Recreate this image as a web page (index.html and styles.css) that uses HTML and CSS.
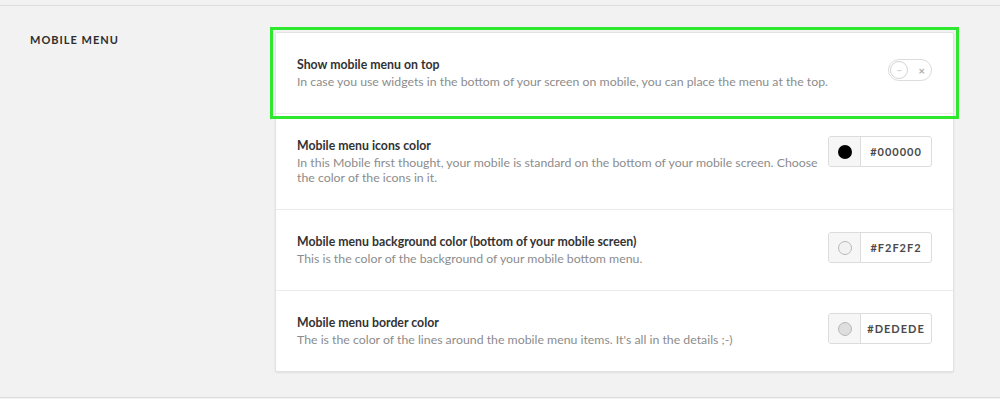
FILE: index.html
```html
<!DOCTYPE html>
<html>
<head>
<meta charset="utf-8">
<link rel="stylesheet" href="styles.css">
</head>
<body>
<section class="settings">
  <h2 class="section-label">MOBILE MENU</h2>
  <div class="card">
    <div class="row row-highlight">
      <div class="text">
        <div class="title">Show mobile menu on top</div>
        <div class="desc">In case you use widgets in the bottom of your screen on mobile, you can place the menu at the top.</div>
      </div>
      <div class="toggle">
        <span class="knob"><span class="dots">···</span></span>
        <span class="xmark">×</span>
      </div>
    </div>
    <div class="row">
      <div class="text">
        <div class="title">Mobile menu icons color</div>
        <div class="desc">In this Mobile first thought, your mobile is standard on the bottom of your mobile screen. Choose the color of the icons in it.</div>
      </div>
      <div class="picker">
        <span class="swatch"><span class="dot dot-black"></span></span>
        <span class="hex">#000000</span>
      </div>
    </div>
    <div class="row">
      <div class="text">
        <div class="title">Mobile menu background color (bottom of your mobile screen)</div>
        <div class="desc">This is the color of the background of your mobile bottom menu.</div>
      </div>
      <div class="picker">
        <span class="swatch"><span class="dot dot-light"></span></span>
        <span class="hex">#F2F2F2</span>
      </div>
    </div>
    <div class="row">
      <div class="text">
        <div class="title">Mobile menu border color</div>
        <div class="desc">The is the color of the lines around the mobile menu items. It's all in the details ;-)</div>
      </div>
      <div class="picker">
        <span class="swatch"><span class="dot dot-grey"></span></span>
        <span class="hex">#DEDEDE</span>
      </div>
    </div>
  </div>
</section>
</body>
</html>
```

FILE: styles.css
```css
html, body {
  margin: 0;
  padding: 0;
  background: #f2f2f2;
  font-family: Lato, "Open Sans", "Liberation Sans", sans-serif;
}

.settings {
  margin-top: 5px;
  border-top: 1px solid #dedede;
  border-bottom: 1px solid #dedede;
  padding: 26px 46px 25px 30px;
  display: flex;
  align-items: flex-start;
}

.section-label {
  margin: 1px 0 0 0;
  width: 245px;
  flex: none;
  font-size: 11px;
  font-weight: 700;
  letter-spacing: 1px;
  color: #2e2e2e;
  line-height: 14px;
}

.card {
  flex: 1;
  background: #fff;
  border: 1px solid #e2e2e2;
  border-radius: 2px;
  box-shadow: 0 1px 2px rgba(0, 0, 0, 0.08);
}

.row {
  display: flex;
  align-items: flex-start;
  gap: 10px;
  padding: 23px 21px 24px 21px;
  border-top: 1px solid #ececec;
}

.row:first-child {
  border-top: none;
}

.row-highlight {
  outline: 3px solid #2ee82e;
  outline-offset: 3px;
}

.text {
  flex: 1;
  min-width: 0;
}

.title {
  font-size: 12.3px;
  font-weight: 700;
  color: #333;
  line-height: 18px;
}

.desc {
  font-size: 12.3px;
  color: #8c8c8c;
  line-height: 15px;
}

.toggle {
  flex: none;
  margin-top: 3px;
  height: 20px;
  width: 35px;
  border: 1px solid #dcdcdc;
  border-radius: 11px;
  display: flex;
  align-items: center;
  justify-content: space-between;
  padding: 0 6px 0 1px;
}

.knob {
  width: 16px;
  height: 16px;
  border: 1px solid #d4d4d4;
  border-radius: 50%;
  display: flex;
  align-items: center;
  justify-content: center;
  background: #fff;
}

.dots {
  font-size: 7px;
  color: #bbb;
  line-height: 1;
  letter-spacing: -0.5px;
}

.xmark {
  font-size: 11px;
  font-weight: 700;
  color: #aaa;
  line-height: 1;
}

.picker {
  flex: none;
  display: flex;
  margin-top: -1px;
  width: 102px;
  height: 29px;
  border: 1px solid #dcdcdc;
  border-radius: 3px;
  overflow: hidden;
  background: #fff;
}

.swatch {
  width: 31px;
  flex: none;
  background: #f6f6f6;
  border-right: 1px solid #dcdcdc;
  display: flex;
  align-items: center;
  justify-content: center;
}

.dot {
  width: 14px;
  height: 14px;
  border-radius: 50%;
  box-sizing: border-box;
}

.dot-black {
  background: #000;
}

.dot-light {
  background: #f2f2f2;
  border: 1px solid #b8b8b8;
}

.dot-grey {
  background: #dedede;
  border: 1px solid #b8b8b8;
}

.hex {
  flex: 1;
  display: flex;
  align-items: center;
  justify-content: center;
  font-size: 11px;
  font-weight: 700;
  letter-spacing: 1px;
  color: #4a4a4a;
}
```
